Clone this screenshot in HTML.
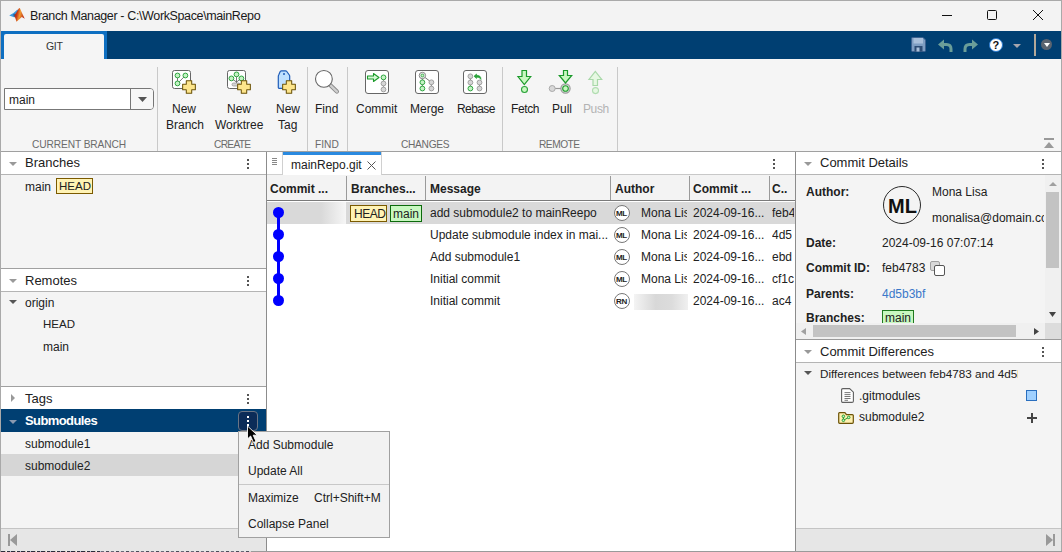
<!DOCTYPE html>
<html><head><meta charset="utf-8">
<style>
*{margin:0;padding:0;box-sizing:border-box}
html,body{width:1062px;height:552px;overflow:hidden;background:#fff}
body{font-family:"Liberation Sans",sans-serif;font-size:12px;color:#212121;position:relative}
.a{position:absolute}
.t{position:absolute;white-space:nowrap;line-height:1}
</style></head><body>
<!-- window border/bg -->
<div class="a" style="left:0;top:0;width:1062px;height:552px;background:#f3f3f3;border:1px solid #a9a9a9"></div>
<!-- title -->
<div class="t" style="left:30px;top:10px;font-size:12.5px;letter-spacing:-0.37px;color:#1a1a1a">Branch Manager - C:\WorkSpace\mainRepo</div>
<!-- matlab logo -->
<svg class="a" style="left:0px;top:0px" width="30" height="30" viewBox="0 0 30 30">
<defs><linearGradient id="lg1" x1="0" y1="0" x2="1" y2="0.3"><stop offset="0" stop-color="#9a1c10"/><stop offset="0.35" stop-color="#c83a18"/><stop offset="0.6" stop-color="#f09a30"/><stop offset="1" stop-color="#c03018"/></linearGradient></defs>
<path d="M9.2 15.6 L13.5 13 L17.5 9.5 L19 11 L16 15.5 L14 17.2 Z" fill="#3a9ae0"/>
<path d="M13 14.5 L15 13.5 L17 16 L14.5 17.5 Z" fill="#2a3a6a" opacity="0.6"/>
<path d="M14.5 15.5 L18.8 8.5 L19.8 8 L22 13 L24.8 18.8 L21.8 17 L16.5 21.8 Z" fill="url(#lg1)"/>
</svg>
<!-- window controls -->
<div class="a" style="left:942px;top:15px;width:10px;height:1px;background:#111"></div>
<div class="a" style="left:987px;top:10px;width:10px;height:10px;border:1px solid #111;border-radius:1.5px"></div>
<svg class="a" style="left:1033px;top:10px" width="10" height="10" viewBox="0 0 10 10"><path d="M0 0 L10 10 M10 0 L0 10" stroke="#111" stroke-width="1"/></svg>

<!-- tab strip -->
<div class="a" style="left:1px;top:31px;width:1060px;height:28px;background:#003f72"></div>
<div class="a" style="left:1px;top:31px;width:106px;height:28px;background:#0e6fc1"></div>
<div class="a" style="left:4px;top:34px;width:100px;height:25px;background:#f5f5f5;border-radius:2px 2px 0 0"></div>
<div class="t" style="left:46px;top:41px;font-size:10.5px;letter-spacing:-0.3px;color:#333">GIT</div>

<!-- quick access icons -->
<svg class="a" style="left:911px;top:37px" width="15" height="15" viewBox="0 0 15 15">
<path d="M1 0.5 H12 L14.5 3 V13.5 Q14.5 14.5 13.5 14.5 H1.5 Q0.5 14.5 0.5 13.5 V1.5 Q0.5 0.5 1.5 0.5 Z" fill="#7d9dc2" stroke="#3d6290" stroke-width="1"/>
<rect x="2.5" y="1" width="9.5" height="5.5" fill="#a8bfda"/>
<rect x="3.5" y="9" width="8" height="5.5" fill="#2c4c75"/>
<rect x="5.5" y="10.5" width="3" height="4" fill="#a8bfda"/>
</svg>
<svg class="a" style="left:937px;top:38px" width="17" height="15" viewBox="0 0 17 15">
<path d="M1 6.5 L7 1.5 V11.5 Z" fill="#6b9e99"/>
<path d="M6 6.5 H9.5 C12.5 6.5 14 8.5 14 11 V14" stroke="#6b9e99" stroke-width="3" fill="none"/>
</svg>
<svg class="a" style="left:962px;top:38px" width="17" height="15" viewBox="0 0 17 15">
<path d="M16 6.5 L10 1.5 V11.5 Z" fill="#6b9e99"/>
<path d="M11 6.5 H7.5 C4.5 6.5 3 8.5 3 11 V14" stroke="#6b9e99" stroke-width="3" fill="none"/>
</svg>
<div class="a" style="left:989px;top:38px;width:14px;height:14px;border-radius:50%;background:#fff;border:1.2px solid #2a7ad0"></div>
<div class="t" style="left:992.5px;top:40px;font-size:11px;font-weight:bold;color:#111">?</div>
<svg class="a" style="left:1013px;top:44px" width="8" height="4" viewBox="0 0 8 4"><path d="M0 0 H8 L4 4 Z" fill="#a6a6ae"/></svg>
<div class="a" style="left:1033.5px;top:34px;width:2px;height:22px;background:#b3a899"></div>
<div class="a" style="left:1041px;top:39px;width:11px;height:11px;border-radius:50%;background:#5b6470"></div>
<svg class="a" style="left:1043.5px;top:43px" width="6" height="4" viewBox="0 0 6 4"><path d="M0 0 H6 L3 4 Z" fill="#fff"/></svg>

<!-- toolstrip -->
<div class="a" style="left:1px;top:59px;width:1060px;height:92px;background:#f5f5f5"></div>
<div class="a" style="left:1px;top:151px;width:1060px;height:1px;background:#a0a0a0"></div>


<!-- CURRENT BRANCH -->
<div class="a" style="left:4px;top:88px;width:150px;height:22px;background:#fff;border:1px solid #777;border-radius:0 4px 4px 0"></div>
<div class="a" style="left:130px;top:89px;width:1px;height:20px;background:#777"></div>
<div class="a" style="left:131px;top:89px;width:22px;height:20px;background:#f7f7f7;border-radius:0 3px 3px 0"></div>
<svg class="a" style="left:138px;top:97px" width="9" height="5" viewBox="0 0 9 5"><path d="M0 0 H9 L4.5 5 Z" fill="#555"/></svg>
<div class="t" style="left:9px;top:94px;font-size:12px;color:#212121">main</div>
<div class="t" style="left:32px;top:140px;font-size:10.2px;letter-spacing:-0.1px;color:#6b6b6b">CURRENT BRANCH</div>
<div class="a" style="left:157px;top:67px;width:1px;height:84px;background:#c9c9c9"></div>

<!-- CREATE -->
<svg class="a" style="left:172px;top:70px" width="19" height="19" viewBox="0 0 19 19">
<rect x="0.5" y="0.5" width="18" height="18" rx="2" fill="#fff" stroke="#666" stroke-width="1"/>
<path d="M5.5 5.5 V13.5 L13.4 5.5" stroke="#555" stroke-width="0.8" fill="none"/>
<circle cx="5.5" cy="5.5" r="2.4" fill="#c4f2c4" stroke="#2ea640" stroke-width="1"/><circle cx="13.4" cy="5.5" r="2.4" fill="#c4f2c4" stroke="#2ea640" stroke-width="1"/><circle cx="5.5" cy="13.4" r="2.4" fill="#c4f2c4" stroke="#2ea640" stroke-width="1"/>
</svg>
<svg class="a" style="left:182px;top:80px" width="14" height="14" viewBox="0 0 15 15"><path d="M4.6 0.7 H10.4 V4.6 H14.3 V10.4 H10.4 V14.3 H4.6 V10.4 H0.7 V4.6 H4.6 Z" fill="#fde58b" stroke="#6b5206" stroke-width="1.1" stroke-linejoin="round"/></svg>
<div class="t" style="left:172px;top:103px">New</div>
<div class="t" style="left:166px;top:119px">Branch</div>

<svg class="a" style="left:227px;top:70px" width="19" height="19" viewBox="0 0 19 19">
<rect x="0.5" y="0.5" width="18" height="18" rx="2" fill="#fff" stroke="#666" stroke-width="1"/>
<path d="M9.5 4.4 V14 M4.4 8.4 L9.5 12 L14.4 8.4" stroke="#555" stroke-width="0.8" fill="none"/>
<rect x="5" y="13" width="8" height="3" rx="1.5" fill="#d4d4d4" stroke="#9c9c9c" stroke-width="0.8"/>
<circle cx="9.5" cy="4.4" r="2.4" fill="#c4f2c4" stroke="#2ea640" stroke-width="1"/><circle cx="4.4" cy="8.4" r="2.4" fill="#c4f2c4" stroke="#2ea640" stroke-width="1"/><circle cx="14.4" cy="8.4" r="2.4" fill="#c4f2c4" stroke="#2ea640" stroke-width="1"/>
</svg>
<svg class="a" style="left:237px;top:80px" width="14" height="14" viewBox="0 0 15 15"><path d="M4.6 0.7 H10.4 V4.6 H14.3 V10.4 H10.4 V14.3 H4.6 V10.4 H0.7 V4.6 H4.6 Z" fill="#fde58b" stroke="#6b5206" stroke-width="1.1" stroke-linejoin="round"/></svg>
<div class="t" style="left:227px;top:103px">New</div>
<div class="t" style="left:215px;top:119px">Worktree</div>

<svg class="a" style="left:277px;top:69.5px" width="14" height="20" viewBox="0 0 14 20">
<path d="M4.5 0.8 H8.5 Q9.3 0.8 9.8 1.5 L12.3 5 Q12.7 5.6 12.7 6.3 V17.5 Q12.7 18.3 12 18.3 H2 Q1.3 18.3 1.3 17.5 V6.3 Q1.3 5.6 1.7 5 L3.2 1.5 Q3.7 0.8 4.5 0.8 Z" fill="#bfe0ff" stroke="#1f5cb8" stroke-width="1.2"/>
<circle cx="7" cy="4" r="1" fill="#1f5cb8"/>
</svg>
<svg class="a" style="left:282px;top:80px" width="14" height="14" viewBox="0 0 15 15"><path d="M4.6 0.7 H10.4 V4.6 H14.3 V10.4 H10.4 V14.3 H4.6 V10.4 H0.7 V4.6 H4.6 Z" fill="#fde58b" stroke="#6b5206" stroke-width="1.1" stroke-linejoin="round"/></svg>
<div class="t" style="left:276px;top:103px">New</div>
<div class="t" style="left:278px;top:119px">Tag</div>
<div class="t" style="left:214px;top:140px;font-size:10.2px;letter-spacing:-0.7px;color:#6b6b6b">CREATE</div>
<div class="a" style="left:307px;top:67px;width:1px;height:84px;background:#c9c9c9"></div>

<!-- FIND -->
<svg class="a" style="left:312px;top:68px" width="30" height="28" viewBox="0 0 30 28">
<path d="M17.6 16.5 L24.9 23.6" stroke="#8a8a8a" stroke-width="4.2" stroke-linecap="round"/>
<path d="M17.6 16.5 L24.9 23.6" stroke="#d0d0d0" stroke-width="2.4" stroke-linecap="round"/>
<circle cx="11.9" cy="10.9" r="8.4" fill="#fff" stroke="#666" stroke-width="1.1"/>
</svg>
<div class="t" style="left:315px;top:103px">Find</div>
<div class="t" style="left:315px;top:140px;font-size:10.2px;color:#6b6b6b">FIND</div>
<div class="a" style="left:347px;top:67px;width:1px;height:84px;background:#c9c9c9"></div>

<!-- CHANGES -->
<svg class="a" style="left:365px;top:70px" width="24" height="24" viewBox="0 0 24 24">
<rect x="0.5" y="0.5" width="23" height="23" rx="2.5" fill="#fff" stroke="#666" stroke-width="1"/>
<path d="M18.5 7.5 V19.5" stroke="#777" stroke-width="0.8"/>
<path d="M2.5 6 H8.5 V3.5 L14 7.5 L8.5 11.5 V9 H2.5 Z" fill="#d4f8d4" stroke="#1b9a2a" stroke-width="1.1" stroke-linejoin="round"/>
<circle cx="18.5" cy="7.4" r="2.4" fill="#c4f2c4" stroke="#2ea640" stroke-width="1"/><circle cx="18.5" cy="13.5" r="2.4" fill="#d6d6d6" stroke="#a0a0a0" stroke-width="1"/><circle cx="18.5" cy="19.5" r="2.4" fill="#d6d6d6" stroke="#a0a0a0" stroke-width="1"/>
</svg>
<div class="t" style="left:356px;top:103px">Commit</div>
<svg class="a" style="left:415px;top:70px" width="24" height="24" viewBox="0 0 24 24">
<rect x="0.5" y="0.5" width="23" height="23" rx="2.5" fill="#fff" stroke="#666" stroke-width="1"/>
<path d="M7.4 5.5 V18.5 M7.4 5.5 L16.4 12.3 V18.5" stroke="#555" stroke-width="0.8" fill="none"/>
<circle cx="7.4" cy="5.5" r="3.2" fill="#eee" stroke="#8a8a8a" stroke-width="1"/>
<circle cx="7.4" cy="5.5" r="1.4" fill="#c8f2c8" stroke="#2aa33a" stroke-width="0.8"/>
<circle cx="7.4" cy="12.3" r="2.4" fill="#c4f2c4" stroke="#2ea640" stroke-width="1"/><circle cx="7.4" cy="18.5" r="2.4" fill="#c4f2c4" stroke="#2ea640" stroke-width="1"/><circle cx="16.4" cy="12.3" r="2.4" fill="#d6d6d6" stroke="#a0a0a0" stroke-width="1"/><circle cx="16.4" cy="18.5" r="2.4" fill="#d6d6d6" stroke="#a0a0a0" stroke-width="1"/>
</svg>
<div class="t" style="left:410px;top:103px">Merge</div>
<svg class="a" style="left:463px;top:70px" width="24" height="24" viewBox="0 0 24 24">
<rect x="0.5" y="0.5" width="23" height="23" rx="2.5" fill="#fff" stroke="#666" stroke-width="1"/>
<path d="M7.4 6.3 V18.5 M16.5 12.5 V18.5" stroke="#555" stroke-width="0.8" fill="none"/>
<path d="M11 6.2 L13.5 4 V5.3 C16.5 5.3 18 6.5 18 9.5 C17 7.8 16 7.3 13.5 7.3 V8.5 Z" fill="#2aa33a" stroke="#1b9a2a" stroke-width="0.6"/>
<circle cx="7.4" cy="6.3" r="2.4" fill="#d6d6d6" stroke="#a0a0a0" stroke-width="1"/><circle cx="7.4" cy="12.5" r="2.4" fill="#d6d6d6" stroke="#a0a0a0" stroke-width="1"/><circle cx="7.4" cy="18.5" r="2.4" fill="#c4f2c4" stroke="#2ea640" stroke-width="1"/><circle cx="16.5" cy="12.5" r="2.4" fill="#d6d6d6" stroke="#a0a0a0" stroke-width="1"/><circle cx="16.5" cy="18.5" r="2.4" fill="#d6d6d6" stroke="#a0a0a0" stroke-width="1"/>
</svg>
<div class="t" style="left:457px;top:103px;letter-spacing:-0.6px">Rebase</div>
<div class="t" style="left:401px;top:140px;font-size:10.2px;letter-spacing:-0.3px;color:#6b6b6b">CHANGES</div>
<div class="a" style="left:502px;top:67px;width:1px;height:84px;background:#c9c9c9"></div>

<!-- REMOTE -->
<svg class="a" style="left:516px;top:69px" width="17" height="25" viewBox="0 0 17 25">
<path d="M6 1.5 H10.5 V7.5 H14.7 L8.3 15.5 L2 7.5 H6 Z" fill="#c8f8c0" stroke="#1b9a2a" stroke-width="1.2" stroke-linejoin="miter"/>
<circle cx="8.5" cy="20.5" r="3" fill="#c8f8c0" stroke="#2aa33a" stroke-width="1.1"/>
</svg>
<div class="t" style="left:511px;top:103px;letter-spacing:-0.4px">Fetch</div>
<svg class="a" style="left:546px;top:69px" width="28" height="26" viewBox="0 0 28 26">
<path d="M9 19.5 H16" stroke="#999" stroke-width="1.2"/>
<circle cx="6.2" cy="19.5" r="3" fill="#d8d8d8" stroke="#aaa" stroke-width="1"/>
<circle cx="19.5" cy="19.5" r="4.6" fill="#e8e8e8" stroke="#999" stroke-width="1.2"/>
<circle cx="19.5" cy="19.5" r="2.8" fill="#c8f8c0" stroke="#1b9a2a" stroke-width="1.1"/>
<path d="M17.5 1.5 H21.5 V6.5 H25.7 L19.5 14 L13.3 6.5 H17.5 Z" fill="#c8f8c0" stroke="#1b9a2a" stroke-width="1.2"/>
</svg>
<div class="t" style="left:552px;top:103px">Pull</div>
<svg class="a" style="left:587px;top:69px" width="17" height="26" viewBox="0 0 17 26">
<path d="M6 16.5 H10.5 V10.5 H14.7 L8.3 2.5 L2 10.5 H6 Z" fill="#e6f8e2" stroke="#a8d8a8" stroke-width="1.2"/>
<circle cx="8.5" cy="21.6" r="3" fill="#e6f8e2" stroke="#b0dcb0" stroke-width="1.1"/>
</svg>
<div class="t" style="left:583px;top:103px;letter-spacing:-0.4px;color:#b3b3b3">Push</div>
<div class="t" style="left:539px;top:140px;font-size:10.2px;letter-spacing:-0.5px;color:#6b6b6b">REMOTE</div>
<div class="a" style="left:617px;top:67px;width:1px;height:84px;background:#c9c9c9"></div>

<!-- collapse toolstrip -->
<div class="a" style="left:1044px;top:138px;width:10px;height:2px;background:#999"></div>
<svg class="a" style="left:1044px;top:142px" width="10" height="6" viewBox="0 0 10 6"><path d="M0 6 L5 0 L10 6 Z" fill="#9a9a9a"/></svg>


<!-- LEFT PANEL -->
<div class="a" style="left:1px;top:152px;width:265px;height:399px;background:#f4f4f4"></div>
<div class="a" style="left:266px;top:152px;width:1px;height:399px;background:#8c8c8c"></div>
<!-- Branches header -->
<div class="a" style="left:1px;top:152px;width:265px;height:22px;background:#fff"></div>
<div class="a" style="left:1px;top:174px;width:265px;height:1px;background:#b4b4b4"></div>
<svg class="a" style="left:9px;top:162px" width="8" height="4" viewBox="0 0 8 4"><path d="M0 0 H8 L4.0 4 Z" fill="#999"/></svg>
<div class="t" style="left:25px;top:156px;font-size:13px;color:#212121">Branches</div>
<div class="a" style="left:247px;top:159px;width:2px;height:2px;background:#555"></div><div class="a" style="left:247px;top:163px;width:2px;height:2px;background:#555"></div><div class="a" style="left:247px;top:167px;width:2px;height:2px;background:#555"></div>
<div class="t" style="left:25px;top:181px;font-size:12px;color:#212121">main</div>
<div class="a" style="left:56px;top:178px;width:37px;height:16px;background:#fff3b5;border:1px solid #7b5a00"></div>
<div class="t" style="left:59px;top:181px;font-size:11.5px;color:#212121">HEAD</div>
<div class="a" style="left:1px;top:268px;width:265px;height:1px;background:#a0a0a0"></div>
<!-- Remotes -->
<div class="a" style="left:1px;top:269px;width:265px;height:22px;background:#fff"></div>
<div class="a" style="left:1px;top:291px;width:265px;height:1px;background:#b4b4b4"></div>
<svg class="a" style="left:9px;top:279px" width="8" height="4" viewBox="0 0 8 4"><path d="M0 0 H8 L4.0 4 Z" fill="#999"/></svg>
<div class="t" style="left:25px;top:274px;font-size:13px;color:#212121">Remotes</div>
<div class="a" style="left:247px;top:276px;width:2px;height:2px;background:#555"></div><div class="a" style="left:247px;top:280px;width:2px;height:2px;background:#555"></div><div class="a" style="left:247px;top:284px;width:2px;height:2px;background:#555"></div>
<svg class="a" style="left:9px;top:300px" width="8" height="4" viewBox="0 0 8 4"><path d="M0 0 H8 L4.0 4 Z" fill="#555"/></svg>
<div class="t" style="left:25px;top:297px;font-size:12px;color:#212121">origin</div>
<div class="t" style="left:43px;top:319px;font-size:11.5px;color:#212121">HEAD</div>
<div class="t" style="left:43px;top:341px;font-size:12px;color:#212121">main</div>
<div class="a" style="left:1px;top:386px;width:265px;height:1px;background:#a0a0a0"></div>
<!-- Tags -->
<div class="a" style="left:1px;top:387px;width:265px;height:22px;background:#fff"></div>
<svg class="a" style="left:11px;top:394px" width="4" height="8" viewBox="0 0 4 8"><path d="M0 0 V8 L4 4.0 Z" fill="#999"/></svg>
<div class="t" style="left:25px;top:392px;font-size:13px;color:#212121">Tags</div>
<div class="a" style="left:247px;top:394px;width:2px;height:2px;background:#555"></div><div class="a" style="left:247px;top:398px;width:2px;height:2px;background:#555"></div><div class="a" style="left:247px;top:402px;width:2px;height:2px;background:#555"></div>
<!-- Submodules -->
<div class="a" style="left:1px;top:409px;width:265px;height:23px;background:#003f72"></div>
<svg class="a" style="left:9px;top:420px" width="8" height="4" viewBox="0 0 8 4"><path d="M0 0 H8 L4.0 4 Z" fill="#8a9ab0"/></svg>
<div class="t" style="left:25px;top:414px;font-size:13px;letter-spacing:-0.6px;font-weight:bold;color:#fff">Submodules</div>
<div class="a" style="left:238px;top:411px;width:20px;height:20px;background:#0b2c58;border:1px solid #6b7585;border-radius:4px"></div>
<div class="a" style="left:247px;top:416px;width:2px;height:2px;background:#fff"></div><div class="a" style="left:247px;top:420px;width:2px;height:2px;background:#fff"></div><div class="a" style="left:247px;top:424px;width:2px;height:2px;background:#fff"></div>
<div class="t" style="left:25px;top:438px;font-size:12px;color:#212121">submodule1</div>
<div class="a" style="left:1px;top:454px;width:265px;height:22px;background:#d6d6d6"></div>
<div class="t" style="left:25px;top:460px;font-size:12px;color:#212121">submodule2</div>
<!-- bottom scrollbar -->
<div class="a" style="left:1px;top:528px;width:265px;height:1px;background:#c4c4c4"></div>
<div class="a" style="left:1px;top:529px;width:265px;height:22px;background:#e6e6e6"></div>
<div class="a" style="left:8px;top:534px;width:2px;height:12px;background:#999"></div>
<svg class="a" style="left:10px;top:534px" width="7" height="12" viewBox="0 0 7 12"><path d="M7 0 V12 L0 6 Z" fill="#999"/></svg>

<!-- CENTER -->
<div class="a" style="left:267px;top:152px;width:528px;height:399px;background:#fff"></div>
<div class="a" style="left:795px;top:152px;width:1px;height:399px;background:#8c8c8c"></div>
<div class="a" style="left:267px;top:174px;width:528px;height:1px;background:#c8c8c8"></div>
<div class="a" style="left:267px;top:152px;width:16px;height:23px;background:#fff;border-right:1px solid #d0d0d0;border-bottom:1px solid #d0d0d0"></div>
<div class="a" style="left:272px;top:158px;width:5px;height:1px;background:#888"></div>
<div class="a" style="left:272px;top:160px;width:5px;height:1px;background:#888"></div>
<div class="a" style="left:272px;top:162px;width:5px;height:1px;background:#888"></div>
<div class="a" style="left:272px;top:164px;width:5px;height:1px;background:#888"></div>
<div class="a" style="left:283px;top:152px;width:99px;height:23px;background:#fff;border-right:1px solid #d0d0d0"></div>
<div class="a" style="left:283px;top:152px;width:98px;height:3px;background:#2a8ae0"></div>
<div class="t" style="left:291px;top:159px;font-size:12px;color:#212121">mainRepo.git</div>
<svg class="a" style="left:367px;top:161px" width="9" height="9" viewBox="0 0 9 9"><path d="M0.5 0.5 L8.5 8.5 M8.5 0.5 L0.5 8.5" stroke="#555" stroke-width="1"/></svg>
<div class="a" style="left:773px;top:159px;width:2px;height:2px;background:#555"></div><div class="a" style="left:773px;top:163px;width:2px;height:2px;background:#555"></div><div class="a" style="left:773px;top:167px;width:2px;height:2px;background:#555"></div>
<!-- table header -->
<div class="a" style="left:267px;top:175px;width:528px;height:25px;background:#f3f3f3"></div>
<div class="a" style="left:267px;top:200px;width:528px;height:1px;background:#7a7a7a"></div>
<div class="a" style="left:346px;top:176px;width:1px;height:24px;background:#9a9a9a"></div>
<div class="a" style="left:425px;top:176px;width:1px;height:24px;background:#9a9a9a"></div>
<div class="a" style="left:610px;top:176px;width:1px;height:24px;background:#9a9a9a"></div>
<div class="a" style="left:689px;top:176px;width:1px;height:24px;background:#9a9a9a"></div>
<div class="a" style="left:769px;top:176px;width:1px;height:24px;background:#9a9a9a"></div>
<div class="t" style="left:270px;top:183px;font-size:12px;font-weight:bold">Commit ...</div>
<div class="t" style="left:351px;top:183px;font-size:12px;font-weight:bold">Branches...</div>
<div class="t" style="left:430px;top:183px;font-size:12px;font-weight:bold">Message</div>
<div class="t" style="left:615px;top:183px;font-size:12px;font-weight:bold">Author</div>
<div class="t" style="left:693px;top:183px;font-size:12px;font-weight:bold">Commit ...</div>
<div class="t" style="left:772px;top:183px;font-size:12px;font-weight:bold">C..</div>
<!-- row 1 selected -->
<div class="a" style="left:267px;top:202px;width:528px;height:22px;background:#d9d9d9"></div>
<div class="a" style="left:321px;top:202px;width:25px;height:22px;background:linear-gradient(to right,#d9d9d9,#f6f6f6)"></div>
<div class="a" style="left:350px;top:205px;width:37px;height:17px;background:#fff3b5;border:1px solid #7b5a00"></div>
<div class="t" style="left:354px;top:208px;font-size:12px;letter-spacing:-0.5px">HEAD</div>
<div class="a" style="left:390px;top:205px;width:32px;height:17px;background:#c8f8c0;border:1px solid #0c6a0c"></div>
<div class="t" style="left:393px;top:208px;font-size:12px">main</div>
<!-- graph -->
<div class="a" style="left:276.5px;top:212px;width:3px;height:88px;background:#0000ff"></div>
<div class="a" style="left:272.5px;top:207px;width:11px;height:11px;border-radius:50%;background:#0000ff"></div>
<div class="a" style="left:272.5px;top:229px;width:11px;height:11px;border-radius:50%;background:#0000ff"></div>
<div class="a" style="left:272.5px;top:251px;width:11px;height:11px;border-radius:50%;background:#0000ff"></div>
<div class="a" style="left:272.5px;top:273px;width:11px;height:11px;border-radius:50%;background:#0000ff"></div>
<div class="a" style="left:272.5px;top:295px;width:11px;height:11px;border-radius:50%;background:#0000ff"></div>
<div class="t" style="left:430px;top:207px;font-size:12px">add submodule2 to mainReepo</div>
<div class="a" style="left:614px;top:205px;width:16px;height:16px;border-radius:50%;background:#fff;border:1px solid #777"></div><div class="t" style="left:616px;top:210px;font-size:8px;letter-spacing:-0.4px;font-weight:bold;color:#222">ML</div>
<div class="t" style="left:641px;top:207px;width:46px;overflow:hidden;font-size:12px">Mona Lisa</div>
<div class="t" style="left:693px;top:207px;font-size:12px">2024-09-16...</div>
<div class="t" style="left:772px;top:207px;width:22px;overflow:hidden;font-size:12px">feb4</div>
<div class="t" style="left:430px;top:229px;font-size:12px">Update submodule index in mai...</div>
<div class="a" style="left:614px;top:227px;width:16px;height:16px;border-radius:50%;background:#fff;border:1px solid #777"></div><div class="t" style="left:616px;top:232px;font-size:8px;letter-spacing:-0.4px;font-weight:bold;color:#222">ML</div>
<div class="t" style="left:641px;top:229px;width:46px;overflow:hidden;font-size:12px">Mona Lisa</div>
<div class="t" style="left:693px;top:229px;font-size:12px">2024-09-16...</div>
<div class="t" style="left:772px;top:229px;width:22px;overflow:hidden;font-size:12px">4d5</div>
<div class="t" style="left:430px;top:251px;font-size:12px">Add submodule1</div>
<div class="a" style="left:614px;top:249px;width:16px;height:16px;border-radius:50%;background:#fff;border:1px solid #777"></div><div class="t" style="left:616px;top:254px;font-size:8px;letter-spacing:-0.4px;font-weight:bold;color:#222">ML</div>
<div class="t" style="left:641px;top:251px;width:46px;overflow:hidden;font-size:12px">Mona Lisa</div>
<div class="t" style="left:693px;top:251px;font-size:12px">2024-09-16...</div>
<div class="t" style="left:772px;top:251px;width:22px;overflow:hidden;font-size:12px">ebd</div>
<div class="t" style="left:430px;top:273px;font-size:12px">Initial commit</div>
<div class="a" style="left:614px;top:271px;width:16px;height:16px;border-radius:50%;background:#fff;border:1px solid #777"></div><div class="t" style="left:616px;top:276px;font-size:8px;letter-spacing:-0.4px;font-weight:bold;color:#222">ML</div>
<div class="t" style="left:641px;top:273px;width:46px;overflow:hidden;font-size:12px">Mona Lisa</div>
<div class="t" style="left:693px;top:273px;font-size:12px">2024-09-16...</div>
<div class="t" style="left:772px;top:273px;width:22px;overflow:hidden;font-size:12px">cf1c</div>
<div class="t" style="left:430px;top:295px;font-size:12px">Initial commit</div>
<div class="a" style="left:614px;top:293px;width:16px;height:16px;border-radius:50%;background:#fff;border:1px solid #777"></div><div class="t" style="left:616px;top:298px;font-size:8px;letter-spacing:-0.4px;font-weight:bold;color:#222">RN</div>
<div class="a" style="left:634px;top:294px;width:54px;height:16px;background:linear-gradient(to right,#f4f4f4,#d8d8d8 40%,#dcdcdc 70%,#f0f0f0)"></div>
<div class="t" style="left:693px;top:295px;font-size:12px">2024-09-16...</div>
<div class="t" style="left:772px;top:295px;width:22px;overflow:hidden;font-size:12px">ac4</div>

<!-- RIGHT PANEL -->
<div class="a" style="left:796px;top:152px;width:265px;height:399px;background:#f4f4f4"></div>
<div class="a" style="left:796px;top:152px;width:265px;height:22px;background:#fff"></div>
<div class="a" style="left:796px;top:174px;width:265px;height:1px;background:#b4b4b4"></div>
<svg class="a" style="left:804px;top:162px" width="8" height="4" viewBox="0 0 8 4"><path d="M0 0 H8 L4.0 4 Z" fill="#999"/></svg>
<div class="t" style="left:820px;top:156px;font-size:13px">Commit Details</div>
<div class="a" style="left:1042px;top:159px;width:2px;height:2px;background:#555"></div><div class="a" style="left:1042px;top:163px;width:2px;height:2px;background:#555"></div><div class="a" style="left:1042px;top:167px;width:2px;height:2px;background:#555"></div>
<div class="t" style="left:806px;top:186px;font-size:12px;font-weight:bold">Author:</div>
<div class="a" style="left:883px;top:186px;width:38px;height:38px;border-radius:50%;border:1.5px solid #2a2a2a;background:#f4f4f4"></div>
<div class="t" style="left:888px;top:196px;font-size:20px;font-weight:bold;color:#111">ML</div>
<div class="t" style="left:932px;top:186px;font-size:12px">Mona Lisa</div>
<div class="t" style="left:932px;top:212px;width:112px;overflow:hidden;font-size:12px">monalisa@domain.com</div>
<div class="t" style="left:806px;top:237px;font-size:12px;font-weight:bold">Date:</div>
<div class="t" style="left:882px;top:237px;font-size:12px">2024-09-16 07:07:14</div>
<div class="t" style="left:806px;top:262px;font-size:12px;font-weight:bold">Commit ID:</div>
<div class="t" style="left:882px;top:262px;font-size:12px">feb4783</div>
<div class="a" style="left:930px;top:261px;width:10px;height:10px;background:#d8d8d8;border:1px solid #a0a0a0;border-radius:2px"></div>
<div class="a" style="left:934px;top:265px;width:11px;height:11px;background:#fff;border:1px solid #555;border-radius:2px"></div>
<div class="t" style="left:806px;top:288px;font-size:12px;font-weight:bold">Parents:</div>
<div class="t" style="left:882px;top:288px;font-size:12px;color:#3a78c9">4d5b3bf</div>
<div class="a" style="left:796px;top:306px;width:249px;height:17px;overflow:hidden">
 <div class="t" style="left:10px;top:6px;font-size:12px;font-weight:bold">Branches:</div>
 <div class="a" style="left:86px;top:4px;width:32px;height:17px;background:#c8f8c0;border:1px solid #207a20"></div>
 <div class="t" style="left:89px;top:6px;font-size:12px">main</div>
</div>
<!-- vertical scrollbar -->
<div class="a" style="left:1045px;top:175px;width:16px;height:148px;background:#f0f0f0"></div>
<svg class="a" style="left:1049px;top:182px" width="8" height="4" viewBox="0 0 8 4"><path d="M0 4 H8 L4 0 Z" fill="#a0a0a0"/></svg>
<div class="a" style="left:1046px;top:192px;width:13px;height:76px;background:#c3c3c3"></div>
<svg class="a" style="left:1049px;top:312px" width="7" height="5" viewBox="0 0 7 5"><path d="M0 0 H7 L3.5 5 Z" fill="#444"/></svg>
<!-- horizontal scrollbar -->
<div class="a" style="left:796px;top:323px;width:249px;height:16px;background:#f0f0f0"></div>
<div class="a" style="left:813px;top:325px;width:203px;height:12px;background:#c3c3c3"></div>
<svg class="a" style="left:801px;top:328px" width="5" height="7" viewBox="0 0 5 7"><path d="M5 0 V7 L0 3.5 Z" fill="#a0a0a0"/></svg>
<svg class="a" style="left:1034px;top:328px" width="5" height="7" viewBox="0 0 5 7"><path d="M0 0 V7 L5 3.5 Z" fill="#444"/></svg>
<div class="a" style="left:1045px;top:323px;width:16px;height:16px;background:#dcdcdc"></div>
<div class="a" style="left:796px;top:339px;width:265px;height:1px;background:#9a9a9a"></div>
<!-- Commit Differences -->
<div class="a" style="left:796px;top:340px;width:265px;height:22px;background:#fff"></div>
<div class="a" style="left:796px;top:362px;width:265px;height:1px;background:#b4b4b4"></div>
<svg class="a" style="left:804px;top:350px" width="8" height="4" viewBox="0 0 8 4"><path d="M0 0 H8 L4.0 4 Z" fill="#999"/></svg>
<div class="t" style="left:820px;top:345px;font-size:13px">Commit Differences</div>
<div class="a" style="left:1042px;top:347px;width:2px;height:2px;background:#555"></div><div class="a" style="left:1042px;top:351px;width:2px;height:2px;background:#555"></div><div class="a" style="left:1042px;top:355px;width:2px;height:2px;background:#555"></div>
<svg class="a" style="left:804px;top:371px" width="8" height="4" viewBox="0 0 8 4"><path d="M0 0 H8 L4.0 4 Z" fill="#555"/></svg>
<div class="t" style="left:820px;top:368px;width:198px;overflow:hidden;font-size:11.7px">Differences between feb4783 and 4d5b3bf</div>
<svg class="a" style="left:841px;top:388px" width="13" height="15" viewBox="0 0 13 15">
<path d="M1.8 0.6 H8.6 L12.4 4.2 V13 Q12.4 14.4 11 14.4 H1.8 Q0.6 14.4 0.6 13 V2 Q0.6 0.6 1.8 0.6 Z" fill="#fff" stroke="#606060" stroke-width="1.1"/>
<path d="M3.5 4.6 H9.5 M3.5 6.6 H9.5 M3.5 8.5 H9.5 M3.5 10.5 H9.5 M3.5 12.3 H7" stroke="#555" stroke-width="0.8"/>
</svg>
<div class="t" style="left:859px;top:390px;font-size:12px">.gitmodules</div>
<div class="a" style="left:1026px;top:390px;width:11px;height:11px;background:#9fd0ff;border:1px solid #2a6fbf"></div>
<svg class="a" style="left:838px;top:412px" width="16" height="12" viewBox="0 0 16 12">
<path d="M1.5 0.7 H6.5 Q7.2 0.7 7.6 1.3 L8.3 2.6 H14.3 Q15.3 2.6 15.3 3.6 V10.3 Q15.3 11.3 14.3 11.3 H1.7 Q0.7 11.3 0.7 10.3 V1.5 Q0.7 0.7 1.5 0.7 Z" fill="#fff0b0" stroke="#6b5206" stroke-width="1.2"/>
<path d="M5.4 4.3 V8.3 M5.4 8.3 L10.7 5.4" stroke="#1b8a2a" stroke-width="0.9"/>
<circle cx="5.4" cy="4.3" r="1.3" fill="#c4f2c4" stroke="#1b9a2a" stroke-width="0.9"/>
<circle cx="5.4" cy="8.3" r="1.3" fill="#c4f2c4" stroke="#1b9a2a" stroke-width="0.9"/>
<circle cx="10.7" cy="5.4" r="1.3" fill="#c4f2c4" stroke="#1b9a2a" stroke-width="0.9"/>
</svg>
<div class="t" style="left:859px;top:411px;font-size:12px">submodule2</div>
<div class="a" style="left:1027px;top:417px;width:10px;height:2px;background:#444"></div>
<div class="a" style="left:1031px;top:413px;width:2px;height:10px;background:#444"></div>
<!-- bottom scrollbar -->
<div class="a" style="left:796px;top:528px;width:265px;height:1px;background:#c4c4c4"></div>
<div class="a" style="left:796px;top:529px;width:265px;height:22px;background:#e6e6e6"></div>
<svg class="a" style="left:1046px;top:534px" width="7" height="12" viewBox="0 0 7 12"><path d="M0 0 V12 L7 6 Z" fill="#999"/></svg>
<div class="a" style="left:1053px;top:534px;width:2px;height:12px;background:#999"></div>

<!-- MENU -->
<div class="a" style="left:238px;top:431px;width:152px;height:107px;background:#f2f2f2;border:1px solid #a0a0a0"></div>
<div class="a" style="left:239px;top:484px;width:150px;height:1px;background:#c8c8c8"></div>
<div class="t" style="left:248px;top:439px;font-size:12px">Add Submodule</div>
<div class="t" style="left:248px;top:465px;font-size:12px">Update All</div>
<div class="t" style="left:248px;top:492px;font-size:12px">Maximize</div>
<div class="t" style="left:314px;top:492px;font-size:12px">Ctrl+Shift+M</div>
<div class="t" style="left:248px;top:518px;font-size:12px">Collapse Panel</div>
<!-- cursor -->
<svg class="a" style="left:246px;top:425px" width="14" height="20" viewBox="0 0 14 20">
<path d="M1.5 1 V14 L4.6 11 L7.5 17.5 L10 16.4 L7.2 10.2 H11.3 Z" fill="#000" stroke="#fff" stroke-width="0.9" stroke-linejoin="miter"/>
</svg>
<!-- bottom edge -->
<div class="a" style="left:0;top:551px;width:1062px;height:1px;background:#9a9a9a"></div>
<div class="a" style="left:1px;top:551px;width:100px;height:1px;background:repeating-linear-gradient(to right,#2a2a3a 0 4px,#c8b89a 4px 5px,#f0f0f0 5px 6px,#303040 6px 9px,#b0c0d0 9px 10px)"></div>
<div class="a" style="left:101px;top:551px;width:150px;height:1px;background:repeating-linear-gradient(to right,#6a6a7a 0 3px,#e0e0e0 3px 5px,#4a4a5a 5px 8px,#d8d8d8 8px 10px)"></div>

</body></html>
